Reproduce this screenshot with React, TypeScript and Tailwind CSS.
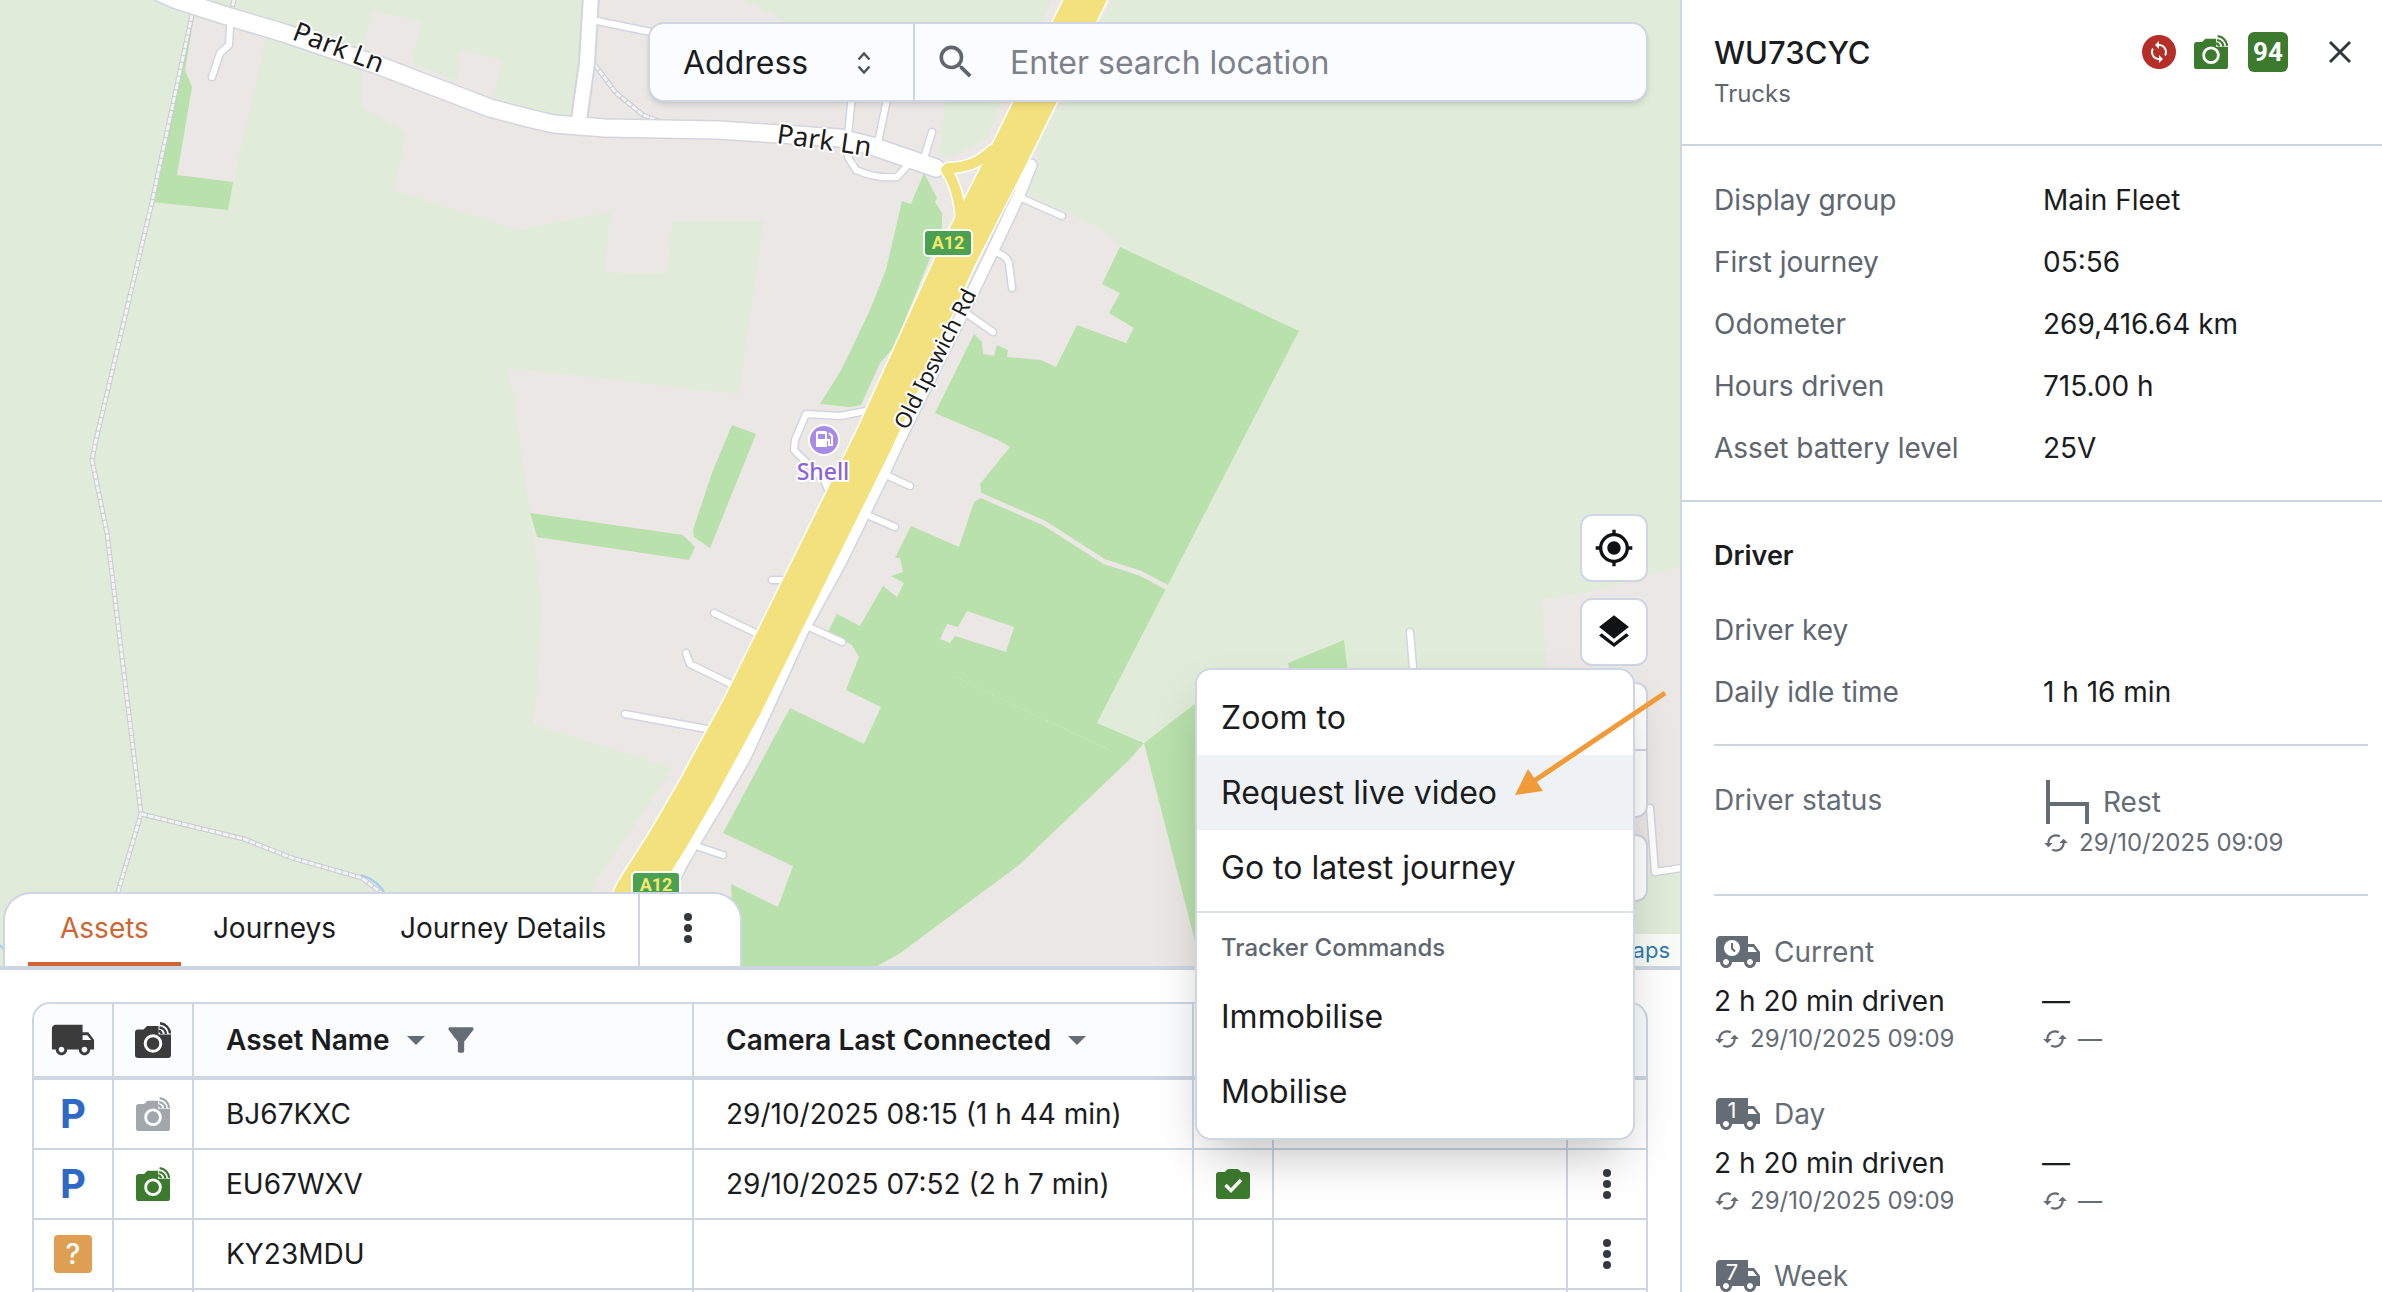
import { useState } from "react";
import type { ReactNode } from "react";
import {
  MdCached,
  MdFilterAlt,
  MdLayers,
  MdLocalShipping,
  MdMyLocation,
  MdSearch,
  MdSync,
} from "react-icons/md";

type Asset = {
  name: string;
  status?: "parked" | "unknown";
  camera?: "online" | "offline";
  connected?: string;
  checked?: boolean;
};

const assets: Asset[] = [
  {
    name: "BJ67KXC",
    status: "parked",
    camera: "offline",
    connected: "29/10/2025 08:15 (1 h 44 min)",
  },
  {
    name: "EU67WXV",
    status: "parked",
    camera: "online",
    connected: "29/10/2025 07:52 (2 h 7 min)",
    checked: true,
  },
  { name: "KY23MDU", status: "unknown" },
  { name: "" },
];

const details = [
  ["Display group", "Main Fleet"],
  ["First journey", "05:56"],
  ["Odometer", "269,416.64 km"],
  ["Hours driven", "715.00 h"],
  ["Asset battery level", "25V"],
];

const tabs = ["Assets", "Journeys", "Journey Details"];

// side roads: white with a thin casing
const sideRoads = [
  "M597 21 651 32",
  "M230 27 229 45 220 53 212 77",
  "M852 95 848 135",
  "M888 95 878 142",
  "M932 132 924 158",
  "M848 157 856 170 Q876 179 897 177 L907 166",
  "M1019 197 1062 216",
  "M993 251Q1008 256 1009 264L1012 288",
  "M966 313 993 332",
  "M886 475 910 486",
  "M867 515 895 527",
  "M809 627 842 642",
  "M772 580 795 580",
  "M714 613 760 635",
  "M686 653 690 664 735 686",
  "M625 714 712 730",
  "M696 846 723 855",
  "M866 411 840 416 806 414 795 440 794 450 824 480 830 494",
  "M1410 632 1414 680",
  "M1650 808 1655 872 1682 868",
];

const tracks = [
  "M192 15 152 202 96 440 92 460 107 533 141 814 117 895",
  "M141 814 244 839 292 858 362 878 384 895",
  "M234 0 231 12",
  "M595 65 616 93 643 115 659 121",
];

const parkLane =
  "M150 -12 177 0 230 17 284 33 375 64 490 108 528 118 554 124 605 128 718 130 840 138 872 146 936 168";
const northRoad = "M591 -4 587 63 579 120";
const serviceRoad =
  "M1031 165 1019 195 993 250 969 300 899 440 883 475 840 563 803 630 745 757 720 800 682 863 664 900";
const trunkRoad =
  "M1100 -30 1035 102 1009 155 957 257 874 440 742 707 697 790 668 840 635 892 600 966";
const slipRoads = "M948 168Q975 168 992 150M946 170Q960 190 961 225";

function RoadBadge({ x, y }: { x: number; y: number }) {
  return (
    <g>
      <rect x={x - 25} y={y - 14} width="50" height="28" rx="5" fill="#fff" />
      <rect x={x - 23} y={y - 12} width="46" height="24" rx="3" fill="#4ba152" />
      <text
        x={x}
        y={y + 6}
        textAnchor="middle"
        className="fill-[#f5e66f] font-['Roboto'] text-[18px] font-bold"
      >
        A12
      </text>
    </g>
  );
}

function MapCanvas() {
  return (
    <svg
      className="absolute inset-0 size-full bg-[#e0ecd9]"
      viewBox="0 0 1680 966"
      preserveAspectRatio="xMinYMin slice"
      aria-label="Map"
    >
      {/* built-up areas */}
      <g fill="#ebe7e4">
        <path d="M193 17 266 38 233 182 177 175 192 87 185 70Z" />
        <path d="M370 11 421 22 412 63 458 82 461 50 502 61 494 97 554 115 572 115 600 0 745 0 785 21 945 102 939 157 955 155 987 138 1001 103 1052 0 1112 0 1060 103 1039 140 1038 167 1020 190 1108 232 1120 247 1160 400 1144 743 1195 702 1196 966 560 966 597 880 673 768 533 724 538 687 542 603 530 513 520 440 508 368 739 394 764 221 672 221 667 273 624 273 605 272 610 212 519 230 394 190 406 133 363 107 363 60Z" />
        <path d="M1542 600 1590 592 1682 566 1682 868 1653 874 1560 874Z" />
        <path d="M1265 674 1288 663 1290 674Z" />
      </g>
      {/* woodland */}
      <g fill="#b8e1ab">
        <path d="M194 17 185 70 192 87 177 175 233 182 228 210 152 202Z" />
        <path d="M924 173 937 198 935 202 942 213 942 230 928 263 894 347 880 363 861 405 850 407 820 404 840 372 851 350 870 310 886 270 902 201 911 204Z" />
        <path d="M732 425 756 434 710 548 694 537 693 530 712 473Z" />
        <path d="M530 513 683 535 695 547 689 560 537 537Z" />
        <path d="M1120 247 1299 331 1097 723 1144 743 1129 760 1019 865 899 954 877 966 735 966 731 884 778 907 793 866 723 833 790 708 864 744 881 707 846 690 859 657 852 645 828 632 837 614 860 626 883 586 897 597 904 583 891 576 903 572 900 558 895 558 911 526 959 547 974 502 982 497 980 484 1010 447 998 440 935 413 974 334 982 342 983 354 994 356 997 345 1008 350 1007 357 1041 360 1056 367 1077 325 1126 343 1134 328 1109 313 1120 293 1102 284Z" />
        <path d="M1144 743 1196 702 1196 945Z" />
        <path d="M1288 663 1344 640 1348 674 1290 674Z" />
      </g>
      {/* open field east of the wood */}
      <path d="M1299 331 1167 587 1097 723 1144 743 1200 700 1260 560 1320 400Z" fill="#e0ecd9" />
      <path d="M967 611 1014 627 1006 652 955 636 950 643 940 639 947 624 958 627Z" fill="#ebe7e4" />
      <path d="M980 495 1044 523 1105 562 1140 573 1168 588" fill="none" stroke="#ebe7e4" strokeWidth="5" />
      <path d="M956 677 1020 708 1110 750" fill="none" stroke="#cfe5c4" strokeDasharray="2 2" />

      {tracks.map((d) => (
        <g key={d} fill="none">
          <path d={d} stroke="#c9ccd0" strokeWidth="5" />
          <path d={d} stroke="#f2f3f4" strokeWidth="3" strokeDasharray="6 1" />
        </g>
      ))}
      <path d="M361 875Q378 880 386 895M0 945 4 950" fill="none" stroke="#9fcdf2" strokeWidth="2" />

      <g fill="none" strokeLinecap="round" strokeLinejoin="round">
        {sideRoads.map((d) => (
          <path key={d} d={d} stroke="#d2d5e0" strokeWidth="9" />
        ))}
        <path d={serviceRoad} stroke="#d2d5e0" strokeWidth="14" />
        <path d={northRoad} stroke="#d2d5e0" strokeWidth="18" />
        <path d={parkLane} stroke="#d2d5e0" strokeWidth="20" />
        {sideRoads.map((d) => (
          <path key={d} d={d} stroke="#fff" strokeWidth="6" />
        ))}
        <path d="M984 168 964 212" stroke="#fff" strokeWidth="7" />
        <path d={serviceRoad} stroke="#fff" strokeWidth="11" />
        <path d={northRoad} stroke="#fff" strokeWidth="14" />
        <path d={parkLane} stroke="#fff" strokeWidth="17" />
        {/* A12 and its slip roads */}
        <path d={trunkRoad} stroke="#fff" strokeWidth="42" />
        <path d={slipRoads} stroke="#fff" strokeWidth="13" />
        <path d={trunkRoad} stroke="#f3e17e" strokeWidth="39" />
        <path d={slipRoads} stroke="#f3e17e" strokeWidth="10" />
      </g>

      <RoadBadge x={948} y={243} />
      <RoadBadge x={656} y={885} />

      <g
        className="fill-[#1b1b1b] font-['Noto_Sans']"
        stroke="#fff"
        strokeWidth="4"
        strokeLinejoin="round"
        paintOrder="stroke"
      >
        <text transform="translate(291 39) rotate(21)" className="text-[27px]">
          Park Ln
        </text>
        <text transform="translate(776 143) rotate(8)" className="text-[27px]">
          Park Ln
        </text>
        <text transform="translate(907 431) rotate(-63)" className="text-[22px]">
          Old Ipswich Rd
        </text>
        <text x="823" y="480" textAnchor="middle" className="fill-[#8b63dc] text-[23px] font-medium">
          Shell
        </text>
      </g>
      <circle cx="824" cy="440" r="15" fill="#a68ce6" stroke="#fff" strokeWidth="2" />
      <path d="M816 433q0-2 2-2h7q2 0 2 2v14h-11Z" fill="#fff" />
      <path d="M818 434h7v5h-7Z" fill="#a68ce6" />
      <path d="M827 440h2v5h3v-9l-3-3" fill="none" stroke="#fff" strokeWidth="2" />
    </svg>
  );
}

function CameraIcon({ className }: { className: string }) {
  return (
    <svg viewBox="0 0 36 36" className={className} aria-hidden="true">
      <path
        d="M3 7.5h5.5L12 4h11.500v8.500H36V33a3 3 0 0 1-3 3H3a3 3 0 0 1-3-3V10.500a3 3 0 0 1 3-3Z"
        fill="currentColor"
      />
      <circle cx="18" cy="21.500" r="7.800" fill="none" stroke="#fff" strokeWidth="3" />
      <path
        d="M23.500 9a3 3 0 0 1 3 3M24.500 5.500a7 7 0 0 1 6.500 6.500M25 1.200a11 11 0 0 1 10 10.300"
        fill="none"
        stroke="currentColor"
        strokeWidth="2.400"
      />
    </svg>
  );
}

function KebabIcon() {
  return (
    <svg viewBox="0 0 8 30" className="h-[30px] w-2 fill-[#33393f]" aria-hidden="true">
      <circle cx="4" cy="4" r="4" />
      <circle cx="4" cy="15" r="4" />
      <circle cx="4" cy="26" r="4" />
    </svg>
  );
}

function SortIcon() {
  return (
    <svg viewBox="0 0 18 9" className="h-[9px] w-[18px] fill-[#646c75]" aria-hidden="true">
      <path d="M0 0h18L9 9Z" />
    </svg>
  );
}

function ClipboardIcon() {
  return (
    <svg viewBox="0 0 34 30" className="h-[30px] w-[34px]" role="img" aria-label="Checked">
      <path
        d="M3 3h6q1.500-3 4-3h8q2.500 0 4 3h6a3 3 0 0 1 3 3v21a3 3 0 0 1-3 3H3a3 3 0 0 1-3-3V6a3 3 0 0 1 3-3Z"
        fill="#3c7b2d"
      />
      <path d="m9.500 16 5.500 5.500L25 11" fill="none" stroke="#fff" strokeWidth="3.500" />
    </svg>
  );
}

function MapButton({ label, children }: { label: string; children?: ReactNode }) {
  return (
    <button
      aria-label={label}
      className="flex size-[68px] items-center justify-center rounded-xl border-2 border-[#cdd6e2] bg-white text-[#101214]"
    >
      {children}
    </button>
  );
}

function SearchBar() {
  return (
    <div className="absolute top-[22px] right-8 flex h-20 w-[1000px] rounded-2xl border-2 border-[#cdd6e2] bg-[#fbfcff] text-[32px] text-[#1a1c1e] shadow-md">
      <div className="relative w-[265px] border-r-2 border-[#cdd6e2]">
        <select
          aria-label="Search by"
          className="size-full appearance-none bg-transparent pt-[2px] pl-[33px] outline-none"
        >
          <option>Address</option>
          <option>Asset</option>
        </select>
        <svg
          viewBox="0 0 14 22"
          className="pointer-events-none absolute top-7 right-[42px] h-[22px] w-[14px]"
          fill="none"
          stroke="#4d555e"
          strokeWidth="2.500"
          aria-hidden="true"
        >
          <path d="m1.500 7.500 5.500-6 5.500 6M1.500 14.500l5.500 6 5.500-6" />
        </svg>
      </div>
      <label className="flex flex-1 items-center gap-8 pl-[19px]">
        <MdSearch className="size-11 text-[#5f666e]" />
        <input
          type="search"
          placeholder="Enter search location"
          className="min-w-0 flex-1 bg-transparent pt-[2px] outline-none placeholder:text-[#7b828b]"
        />
      </label>
    </div>
  );
}

function Tabs() {
  const [active, setActive] = useState("Assets");

  return (
    <nav className="absolute bottom-0 left-[3px] flex h-[74px] rounded-t-[28px] border-2 border-b-0 border-[#cdd6e2] bg-white pl-[23px] text-[28px] text-[#1a1c1e]">
      {tabs.map((tab) => (
        <button
          key={tab}
          onClick={() => setActive(tab)}
          className={`border-b-4 px-8 ${
            tab === active ? "border-[#cf6532] text-[#cf6532]" : "border-transparent"
          }`}
        >
          {tab}
        </button>
      ))}
      <button
        aria-label="More tabs"
        className="flex w-[102px] items-center justify-center border-l-2 border-[#cdd6e2] pr-1 pb-1"
      >
        <KebabIcon />
      </button>
    </nav>
  );
}

function ContextMenu() {
  return (
    <div
      role="menu"
      className="absolute right-[45px] bottom-[152px] flex w-[440px] flex-col rounded-2xl border-2 border-[#cdd6e2] bg-white pt-[10px] pb-[9px] text-[32px] text-[#1a1c1e] shadow-2xl"
    >
      <button role="menuitem" className="h-[75px] px-6 text-left">Zoom to</button>
      <button role="menuitem" className="h-[75px] bg-[#eef2f5] px-6 text-left">Request live video</button>
      <button role="menuitem" className="h-[75px] px-6 text-left">Go to latest journey</button>
      <div className="mt-[6px] border-t-2 border-[#dbe2ea] px-6 pt-[17px] pb-[13px] text-[24px] leading-9 font-medium text-[#5e6670]">
        Tracker Commands
      </div>
      <button role="menuitem" className="h-[75px] px-6 text-left">Immobilise</button>
      <button role="menuitem" className="h-[75px] px-6 text-left">Mobilise</button>
    </div>
  );
}

function AssetTable() {
  const head = "border-b-4 border-r-2 border-[#cdd6e2] bg-[#fbfcfe] text-left font-semibold";
  const cell = "border-b-2 border-r-2 border-[#cdd6e2]";

  return (
    <table className="w-full table-fixed border-separate border-spacing-0 rounded-t-[18px] border-t-2 border-l-2 border-[#cdd6e2] text-[28px] text-[#1a1c1e]">
      <colgroup>
        <col className="w-20" />
        <col className="w-20" />
        <col className="w-[500px]" />
        <col className="w-[500px]" />
        <col className="w-20" />
        <col />
        <col className="w-20" />
      </colgroup>
      <thead>
        <tr className="h-[76px]">
          <th className={`${head} rounded-tl-2xl`} aria-label="Status">
            <MdLocalShipping className="mx-auto size-[46px] text-[#3b3b3b]" />
          </th>
          <th className={head} aria-label="Camera">
            <CameraIcon className="mx-auto size-9 text-[#3b3b3b]" />
          </th>
          <th className={head}>
            <div className="flex items-center gap-[17px] pl-8">
              Asset Name
              <SortIcon />
              <MdFilterAlt className="size-[38px] text-[#646c75]" />
            </div>
          </th>
          <th className={head}>
            <div className="flex items-center gap-[17px] pl-8">
              Camera Last Connected
              <SortIcon />
            </div>
          </th>
          <th className={head} aria-label="Checks" />
          <th className={head} />
          <th className={`${head} rounded-tr-2xl`} aria-label="Actions" />
        </tr>
      </thead>
      <tbody>
        {assets.map((asset) => (
          <tr key={asset.name} className="h-[70px]">
            <td className={`${cell} text-center`}>
              {asset.status === "parked" && (
                <span className="text-[40px] leading-[60px] font-bold text-[#2f69c6]">P</span>
              )}
              {asset.status === "unknown" && (
                <span className="mx-auto flex size-[38px] items-center justify-center rounded bg-[#df9f52] font-medium text-white">
                  ?
                </span>
              )}
            </td>
            <td className={cell}>
              {asset.camera && (
                <CameraIcon
                  className={`mx-auto size-[34px] ${
                    asset.camera === "online" ? "text-[#3c7b2d]" : "text-[#a2a7ad]"
                  }`}
                />
              )}
            </td>
            <td className={`${cell} pl-8`}>{asset.name}</td>
            <td className={`${cell} pl-8`}>{asset.connected}</td>
            <td className={cell}>
              <div className="flex justify-center">{asset.checked && <ClipboardIcon />}</div>
            </td>
            <td className={cell} />
            <td className={cell}>
              {asset.name && (
                <button aria-label={`Actions for ${asset.name}`} className="mx-auto block">
                  <KebabIcon />
                </button>
              )}
            </td>
          </tr>
        ))}
      </tbody>
    </table>
  );
}

function UpdatedAt({ children }: { children: ReactNode }) {
  return (
    <div className="flex items-center gap-[10px] text-[24px] leading-[26px] text-[#646c75]">
      <MdCached className="size-[26px]" />
      {children}
    </div>
  );
}

type DrivingTimeProps = {
  label: string;
  driven?: string;
  updated?: string;
  children: ReactNode;
};

function DrivingTime({ label, driven, updated, children }: DrivingTimeProps) {
  return (
    <div>
      <div className="flex h-12 items-center gap-3 text-[28px] text-[#646c75]">
        <div className="relative size-12">
          <MdLocalShipping className="size-12" />
          <span className="absolute top-[10px] left-[10px] flex h-5 w-4 items-center justify-center text-[22px] leading-none text-white">
            {children}
          </span>
        </div>
        {label}
      </div>
      {driven && (
        <div className="grid grid-cols-[328px_1fr]">
          <p className="h-[50px] text-[28px] leading-[50px]">{driven}</p>
          <p className="h-[50px] text-[28px] leading-[50px]">—</p>
          <UpdatedAt>{updated}</UpdatedAt>
          <UpdatedAt>—</UpdatedAt>
        </div>
      )}
    </div>
  );
}

function DetailRow({ label, value }: { label: string; value?: string }) {
  return (
    <div className="grid h-[62px] grid-cols-[329px_1fr] items-center">
      <dt className="text-[#5e6670]">{label}</dt>
      <dd>{value}</dd>
    </div>
  );
}

function AssetPanel() {
  return (
    <aside className="flex w-[702px] shrink-0 flex-col overflow-hidden border-l-2 border-[#cdd6e2] bg-white text-[28px] text-[#1a1c1e]">
      <header className="flex h-[146px] shrink-0 items-start border-b-2 border-[#cdd6e2] pt-8 pr-[26px] pl-8">
        <div className="flex-1">
          <h1 className="text-[31px] leading-[42px] font-medium">WU73CYC</h1>
          <p className="mt-1 text-[24px] leading-8 text-[#5e6670]">Trucks</p>
        </div>
        <div className="flex h-10 items-center">
          <span className="flex size-[34px] items-center justify-center rounded-full bg-[#b52f28] text-white">
            <MdSync className="size-6" />
          </span>
          <CameraIcon className="ml-[18px] size-[34px] text-[#3c7b2d]" />
          <span className="ml-5 flex size-10 items-center justify-center rounded-md bg-[#3c7b2d] font-['Roboto',sans-serif] text-[26px] font-bold text-white">
            94
          </span>
          <button aria-label="Close" className="ml-9 flex size-8 items-center justify-center">
            <svg viewBox="0 0 24 24" className="size-6" stroke="#33393f" strokeWidth="3" aria-hidden="true">
              <path d="M2 2 22 22M22 2 2 22" />
            </svg>
          </button>
        </div>
      </header>

      <dl className="border-b-2 border-[#cdd6e2] pt-[23px] pb-[21px] pl-8">
        {details.map(([label, value]) => (
          <DetailRow key={label} label={label} value={value} />
        ))}
      </dl>

      <section className="pr-[14px] pl-8">
        <h2 className="mt-[23px] mb-3 text-[27px] leading-[62px] font-semibold">Driver</h2>
        <dl className="border-b-2 border-[#cdd6e2] pb-[21px]">
          <DetailRow label="Driver key" />
          <DetailRow label="Daily idle time" value="1 h 16 min" />
        </dl>

        <div className="grid h-[150px] grid-cols-[329px_1fr] border-b-2 border-[#cdd6e2] text-[#646c75]">
          <p className="mt-[30px] leading-[48px]">Driver status</p>
          <div className="pt-[34px]">
            <div className="mb-[6px] flex items-center gap-[14px]">
              <svg
                viewBox="0 0 46 44"
                className="h-11 w-[46px]"
                fill="none"
                stroke="currentColor"
                strokeWidth="4"
                aria-hidden="true"
              >
                <path d="M5 0V44M5 24H44V44" />
              </svg>
              Rest
            </div>
            <UpdatedAt>29/10/2025 09:09</UpdatedAt>
          </div>
        </div>

        <div className="flex flex-col gap-[38px] pt-8">
          <DrivingTime label="Current" driven="2 h 20 min driven" updated="29/10/2025 09:09">
            <svg viewBox="0 0 16 16" className="size-4 shrink-0 overflow-visible" aria-hidden="true">
              <circle cx="8" cy="8" r="8" fill="#fff" />
              <path d="M8 3v5.500l3 3" fill="none" stroke="#646c75" strokeWidth="2" />
            </svg>
          </DrivingTime>
          <DrivingTime label="Day" driven="2 h 20 min driven" updated="29/10/2025 09:09">
            1
          </DrivingTime>
          <DrivingTime label="Week">7</DrivingTime>
        </div>
      </section>
    </aside>
  );
}

export default function App() {
  return (
    <div className="flex h-screen overflow-hidden bg-white font-['Inter',sans-serif]">
      <main className="relative flex min-w-0 flex-1 flex-col">
        <section className="relative min-h-0 flex-1 overflow-hidden">
          <MapCanvas />
          <SearchBar />
          <div className="absolute right-8 bottom-16 flex flex-col gap-4">
            <MapButton label="My location">
              <MdMyLocation className="size-10" />
            </MapButton>
            <MapButton label="Map layers">
              <MdLayers className="size-10" />
            </MapButton>
            <div className="flex h-[136px] flex-col rounded-xl border-2 border-[#cdd6e2] bg-white">
              <button aria-label="Zoom in" className="flex-1 border-b-2 border-[#cdd6e2]" />
              <button aria-label="Zoom out" className="flex-1" />
            </div>
            <MapButton label="Full screen" />
          </div>
          <div className="absolute right-0 bottom-0 h-8 bg-white/80 px-[10px] text-[22px] leading-8 text-[#2f7cb0]">
            <a href="#maps">Maps</a>
          </div>
          <Tabs />
        </section>

        <section className="h-[326px] shrink-0 overflow-hidden border-t-4 border-[#cdd6e2] px-8 pt-8">
          <AssetTable />
        </section>

        <ContextMenu />
        {/* pointer to the highlighted menu entry */}
        <svg
          viewBox="0 0 154 108"
          className="pointer-events-none absolute right-3 bottom-[495px] h-[108px] w-[154px]"
          aria-hidden="true"
        >
          <path d="M151 4 20 92" stroke="#f09a38" strokeWidth="5" />
          <path d="M1 106 14 80 29 102Z" fill="#f09a38" />
        </svg>
      </main>
      <AssetPanel />
    </div>
  );
}
